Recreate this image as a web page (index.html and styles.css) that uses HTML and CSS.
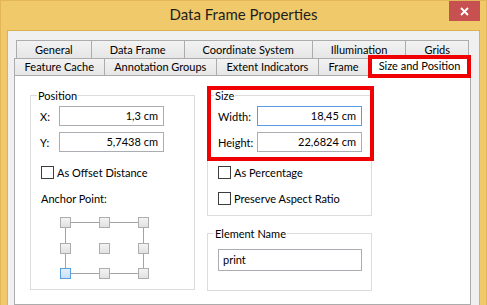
FILE: index.html
```html
<!DOCTYPE html>
<html>
<head>
<meta charset="utf-8">
<title>Data Frame Properties</title>
<link rel="stylesheet" href="styles.css">
</head>
<body>
<div class="window">
  <div class="titlebar">
    <div class="title">Data Frame Properties</div>
    <div class="close">
      <svg width="9" height="9" viewBox="0 0 9 9"><path d="M1 1 L8 8 M8 1 L1 8" stroke="#fff" stroke-width="1.9" fill="none"/></svg>
    </div>
  </div>
  <div class="client">
    <div class="tabrow back">
      <div class="tab">General</div>
      <div class="tab">Data Frame</div>
      <div class="tab">Coordinate System</div>
      <div class="tab">Illumination</div>
      <div class="tab">Grids</div>
    </div>
    <div class="tabrow front">
      <div class="tab">Feature Cache</div>
      <div class="tab">Annotation Groups</div>
      <div class="tab">Extent Indicators</div>
      <div class="tab">Frame</div>
      <div class="tab selected">Size and Position<span class="mark tab-mark"></span></div>
    </div>
    <div class="panel">
      <fieldset class="group position">
        <legend>Position</legend>
        <div class="field first"><span class="label">X:</span><span class="input">1,3 cm</span></div>
        <div class="field"><span class="label">Y:</span><span class="input">5,7438 cm</span></div>
        <div class="check first-check"><span class="box"></span>As Offset Distance</div>
        <div class="anchor-label">Anchor Point:</div>
        <svg class="anchor" width="90" height="62" viewBox="0 0 90 62">
          <defs>
            <linearGradient id="sq" x1="0" y1="0" x2="0" y2="1">
              <stop offset="0" stop-color="#F4F4F4"/>
              <stop offset="1" stop-color="#E0E0E0"/>
            </linearGradient>
            <linearGradient id="sqsel" x1="0" y1="0" x2="0" y2="1">
              <stop offset="0" stop-color="#E6F1FC"/>
              <stop offset="1" stop-color="#C6DFF8"/>
            </linearGradient>
          </defs>
          <g stroke="#A2A2A2" stroke-width="1">
            <line x1="11" y1="5.5" x2="39" y2="5.5"/>
            <line x1="50" y1="5.5" x2="78" y2="5.5"/>
            <line x1="11" y1="56.5" x2="39" y2="56.5"/>
            <line x1="50" y1="56.5" x2="78" y2="56.5"/>
            <line x1="5.5" y1="11" x2="5.5" y2="26"/>
            <line x1="5.5" y1="37" x2="5.5" y2="51"/>
            <line x1="83.5" y1="11" x2="83.5" y2="26"/>
            <line x1="83.5" y1="37" x2="83.5" y2="51"/>
          </g>
          <g fill="url(#sq)" stroke="#ADADAD" stroke-width="1">
            <rect x="0.5" y="0.5" width="10" height="10"/>
            <rect x="39.5" y="0.5" width="10" height="10"/>
            <rect x="78.5" y="0.5" width="10" height="10"/>
            <rect x="0.5" y="26.5" width="10" height="10"/>
            <rect x="39.5" y="26.5" width="10" height="10"/>
            <rect x="78.5" y="26.5" width="10" height="10"/>
            <rect x="39.5" y="51.5" width="10" height="10"/>
            <rect x="78.5" y="51.5" width="10" height="10"/>
          </g>
          <rect x="0.5" y="51.5" width="10" height="10" fill="url(#sqsel)" stroke="#5C9DDE" stroke-width="1"/>
        </svg>
      </fieldset>
      <div class="col">
        <div class="marked">
          <fieldset class="group size">
            <legend>Size</legend>
            <div class="field first"><span class="label">Width:</span><span class="input focus">18,45 cm</span></div>
            <div class="field"><span class="label">Height:</span><span class="input">22,6824 cm</span></div>
            <div class="check first-check"><span class="box"></span>As Percentage</div>
            <div class="check"><span class="box"></span>Preserve Aspect Ratio</div>
          </fieldset>
          <span class="mark group-mark"></span>
        </div>
        <fieldset class="group name">
          <legend>Element Name</legend>
          <div class="input text">print</div>
        </fieldset>
      </div>
    </div>
  </div>
</div>
</body>
</html>
```

FILE: styles.css
```css
* {
  box-sizing: border-box;
}

html,
body {
  margin: 0;
  padding: 0;
}

body {
  width: 487px;
  height: 305px;
  overflow: hidden;
  font-family: "Lato", "Open Sans", sans-serif;
  font-size: 11px;
  color: #000;
  background: #F0C96A;
}

.window {
  width: 487px;
  height: 305px;
  display: flex;
  flex-direction: column;
  background: #F0C96A;
  border: 1px solid #E3B757;
  border-bottom: none;
  padding: 0 6px;
  overflow: hidden;
}

.titlebar {
  height: 29px;
  flex: none;
  display: grid;
  grid-template-columns: 1fr auto 1fr;
  align-items: start;
}

.title {
  grid-column: 2;
  margin-top: 3px;
  font-size: 15px;
  line-height: 20px;
  color: #1E1E1E;
  white-space: nowrap;
}

.close {
  grid-column: 3;
  justify-self: end;
  width: 31px;
  height: 20px;
  background: #C75050;
  display: flex;
  align-items: center;
  justify-content: center;
  padding-top: 1px;
}

.close svg {
  display: block;
}

.client {
  flex: 1;
  min-height: 0;
  display: flex;
  flex-direction: column;
  background: #F0F0F0;
  border: 1px solid #DDB153;
  border-bottom: none;
  padding: 9px 8px 0 6px;
  overflow: hidden;
}

.tabrow {
  display: flex;
  flex: none;
}

.tabrow.back {
  height: 18px;
  margin: 0 2px;
}

.tabrow.front {
  height: 17px;
}

.tab {
  flex: 1 1 auto;
  padding: 0 4px;
  text-align: center;
  white-space: nowrap;
  border: 1px solid #ACACAC;
  border-right: none;
  border-bottom: none;
  background: linear-gradient(#F2F2F2, #E6E6E6);
}

.tab:last-child {
  border-right: 1px solid #ACACAC;
}

.back .tab {
  line-height: 17px;
}

.front .tab {
  line-height: 16px;
}

.front .tab.selected {
  position: relative;
  z-index: 2;
  margin-top: -2px;
  height: 20px;
  line-height: 18px;
  background: #FFFFFF;
}

.mark {
  position: absolute;
  border: 4px solid #F00000;
  pointer-events: none;
}

.tab-mark {
  left: -1px;
  right: -1px;
  top: -2px;
  height: 23px;
}

.panel {
  flex: 1;
  display: flex;
  align-items: flex-start;
  gap: 12px;
  background: #FFFFFF;
  border: 1px solid #ACACAC;
  padding: 13px 0 0 15px;
}

.col {
  display: flex;
  flex-direction: column;
}

.group {
  margin: 0;
  width: 165px;
  min-width: 0;
  border: 1px solid #DCDCDC;
  padding: 0 0 10px 0;
}

.group legend {
  margin-left: 6px;
  padding: 0 1px;
  line-height: 13px;
  height: 13px;
}

.field {
  display: flex;
  align-items: center;
  height: 20px;
  margin-top: 6px;
}

.field.first {
  margin-top: 4px;
}

.position .field {
  margin-left: 9px;
}

.position .label {
  width: 19px;
}

.size .field {
  margin-left: 10px;
}

.size .label {
  width: 39px;
}

.label {
  line-height: 13px;
  padding-top: 1px;
}

.input {
  display: block;
  width: 105px;
  height: 20px;
  border: 1px solid #ABADB3;
  background: #FFFFFF;
  text-align: right;
  padding: 0 5px 0 4px;
  line-height: 18px;
  white-space: nowrap;
}

.input.focus {
  border-color: #569DE5;
}

.check {
  display: flex;
  align-items: center;
  height: 13px;
  line-height: 13px;
  margin-top: 13px;
  margin-left: 10px;
  white-space: nowrap;
}

.check.first-check {
  margin-top: 14px;
}

.box {
  width: 13px;
  height: 13px;
  border: 1px solid #3C3C3C;
  background: #FFFFFF;
  margin-right: 3px;
  flex: none;
}

.anchor-label {
  margin: 13px 0 0 10px;
  line-height: 13px;
}

.anchor {
  display: block;
  margin: 12px 0 0 29px;
}

.marked {
  position: relative;
}

.group-mark {
  left: 0;
  top: -3px;
  width: 167px;
  height: 75px;
}

.group.name {
  margin-top: 11px;
  padding-bottom: 19px;
}

.input.text {
  width: 144px;
  height: 22px;
  margin: 9px 0 0 10px;
  text-align: left;
  line-height: 20px;
}
```
